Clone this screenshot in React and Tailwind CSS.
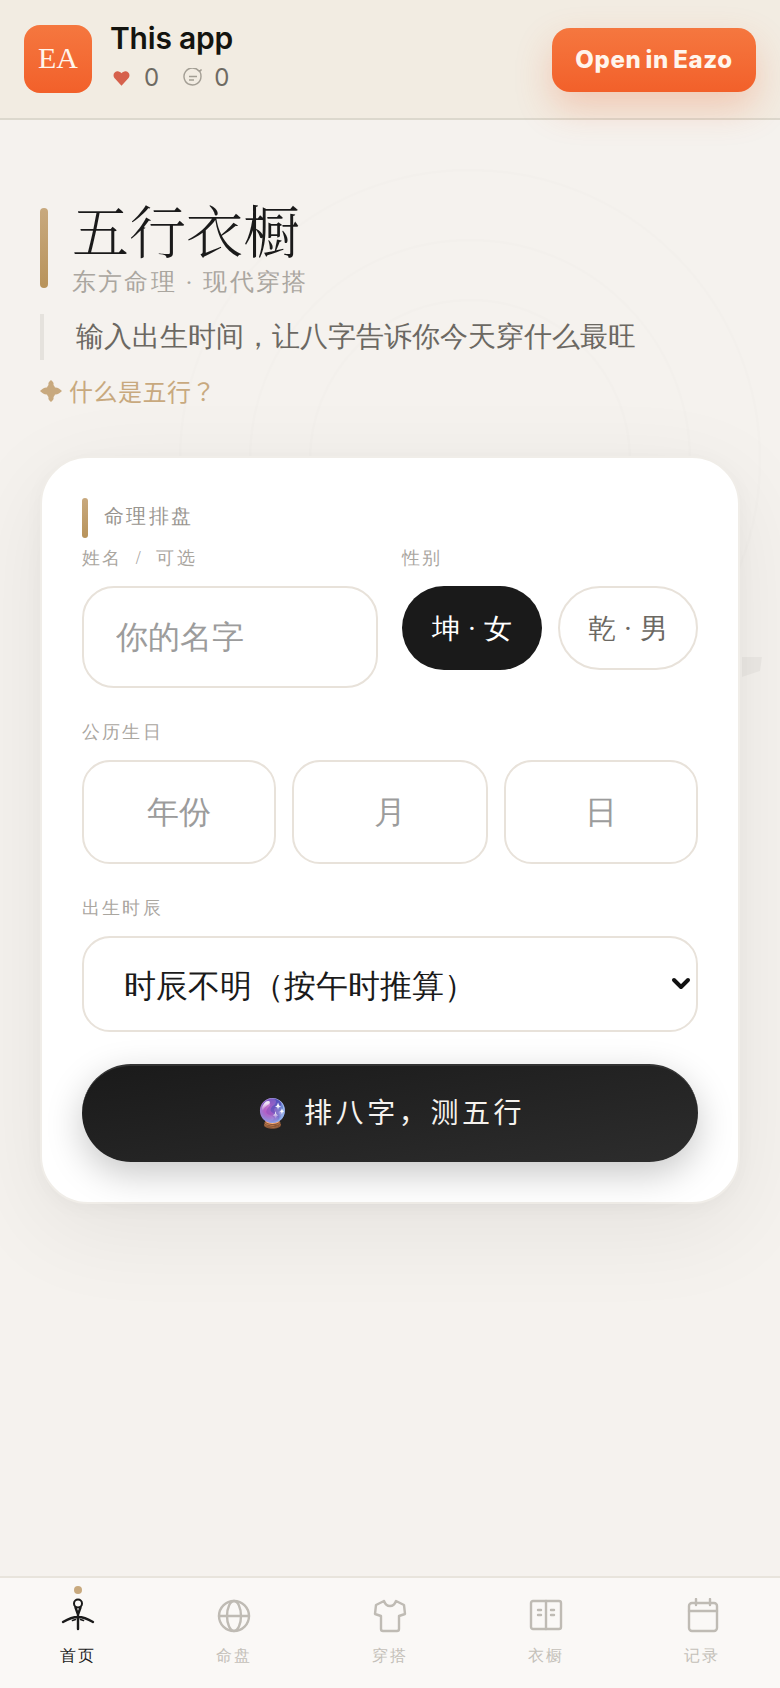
import React from "react";

function NavIcon({ children, active }) {
  return (
    <svg width="36" height="36" viewBox="0 0 36 36" fill="none" stroke={active ? "#1a1a1a" : "#bfbbb4"} strokeWidth="2.4" strokeLinecap="round" strokeLinejoin="round">
      {children}
    </svg>
  );
}

const tabs = [
  {
    label: "首页",
    active: true,
    icon: (
      <>
        <circle cx="18" cy="5.500" r="4" strokeWidth="2" />
        <path d="M18 17v14M3 24c5-3 10-5 15-5s10 2 15 5M15.500 9.500l2.500 7 2.500-7" />
        <path d="M12.500 22.500l3-1M23.500 22.500l-3-1" strokeWidth="1.600" />
      </>
    ),
  },
  {
    label: "命盘",
    icon: (
      <>
        <circle cx="18" cy="18" r="15" />
        <ellipse cx="18" cy="18" rx="7" ry="15" />
        <path d="M3 18h30" />
      </>
    ),
  },
  {
    label: "穿搭",
    icon: <path d="M12 3 4 7 3 16l6 2v13a2 2 0 0 0 2 2h14a2 2 0 0 0 2-2V18l6-2-1-9-8-4c-1 3-3 5-6 5s-5-2-6-5Z" />,
  },
  {
    label: "衣橱",
    icon: (
      <>
        <rect x="3" y="3" width="30" height="28" rx="2" />
        <path d="M18 3v28M10 12h3M10 17h3M23 12h3M23 17h3" />
      </>
    ),
  },
  {
    label: "记录",
    icon: (
      <>
        <rect x="5" y="5" width="28" height="28" rx="3" />
        <path d="M5 13h28M12 1v6M26 1v6" />
      </>
    ),
  },
];

export default function App() {
  return (
    <div className="relative flex h-[1688px] w-[780px] flex-col overflow-hidden bg-[#f5f2ee] font-['Liberation_Serif',serif]">
      {/* Header */}
      <header className="relative z-10 flex h-[120px] shrink-0 items-center justify-between border-b-2 border-[#dcd8cd] bg-[#f2ece2] px-6 font-['Inter','Noto_Sans_CJK_SC',sans-serif]">
        <div className="flex items-center gap-[18px]">
          <div className="flex size-[68px] items-center justify-center rounded-2xl bg-gradient-to-b from-[#f5773f] to-[#f2602a] pb-1 font-['Liberation_Serif',serif] text-[30px] text-[#fff5ec]">
            EA
          </div>
          <div className="-mt-2 flex flex-col">
            <div className="text-[30px] font-semibold leading-[38px] tracking-[-0.2px] text-[#14140f]">This app</div>
            <div className="mt-[7px] flex items-center text-[24px] leading-7 text-[#6e6a62]">
              <svg width="17" height="16" viewBox="0 0 20 18" className="ml-[3px]">
                <path d="M10 18 2.500 10C-1 6.500.8 1.500 4.800 1 7 .8 9 2 10 3.500 11 2 13 .8 15.200 1c4 .5 5.800 5.500 2.300 9Z" fill="#d6614c" />
              </svg>
              <span className="ml-[14px]">0</span>
              <svg width="20" height="20" viewBox="0 0 20 20" fill="none" stroke="#a39e94" strokeWidth="1.400" className="ml-6">
                <path d="M18.500 1.500l-2.300 1.700A8.500 8.500 0 1 0 18 8.500c0-2-.3-3.500-1.200-5Z" />
                <path d="M6 8.500h8M6 12h5" />
              </svg>
              <span className="ml-[11px]">0</span>
            </div>
          </div>
        </div>
        <div className="mt-[2px] flex h-16 w-[204px] items-center justify-center rounded-[18px] bg-gradient-to-b from-[#f5773f] to-[#f2602a] text-[24px] font-extrabold tracking-[0.6px] text-[#fff5ec] shadow-[0_16px_36px_rgba(240,96,42,0.25)] [word-spacing:-1.500px]">
          Open in Eazo
        </div>
      </header>

      {/* Hero */}
      <main className="relative flex flex-1 flex-col px-10">
        <svg className="absolute left-0 top-0" width="780" height="900" fill="none" stroke="#000" strokeOpacity="0.006" strokeWidth="3">
          <circle cx="470" cy="340" r="160" />
          <circle cx="470" cy="340" r="220" />
          <circle cx="470" cy="340" r="290" />
          <path d="M742 537h20l-2 14-18 6Z" fill="#000" fillOpacity="0.035" stroke="none" />
        </svg>
        <div className="relative mt-[76px] flex items-start gap-6">
          <div className="mt-[12px] h-20 w-2 rounded bg-gradient-to-b from-[#c8a97e] to-[#b8935a]" />
          <div className="flex flex-col">
            <h1 className="font-['Noto_Serif_CJK_SC','Noto_Sans_CJK_SC',serif] text-[57px] font-light leading-[64px] text-[#1a1a1a]">五行衣橱</h1>
            <p className="mt-[6px] text-[24px] leading-[32px] tracking-[2.2px] text-[#aaa69f]">东方命理 · 现代穿搭</p>
          </div>
        </div>

        <div className="relative mt-[16px] flex h-[46px] items-center border-l-4 border-[#e5e2dd] pl-8 font-[sans-serif] text-[28px] text-[#6b6862]">
          输入出生时间，让八字告诉你今天穿什么最旺
        </div>

        <div className="relative mt-[15px] flex items-center font-['Noto_Sans_CJK_TC',sans-serif] text-[24px] leading-8 tracking-[0.5px] text-[#c8a97e]">
          <span className="mr-[7px]">
            <svg width="22" height="22" viewBox="0 0 22 22" fill="#c8a97e" className="block">
              <path d="M11 0c2 1.500 3 3 2.500 5 .8 1 1.200 1.800 1.500 2.500 2-.5 5 1.500 7 3.500-2 2-5 4-7 3.500-.3.700-.7 1.500-1.500 2.500.5 2-.5 3.500-2.500 5-2-1.500-3-3-2.500-5-.8-1-1.200-1.800-1.500-2.500-2 .5-5-1.500-7-3.500 2-2 5-4 7-3.500.3-.7.7-1.500 1.500-2.500C8 3 9 1.500 11 0Z" />
            </svg>
          </span>
          什么是五行？
        </div>

        {/* Card */}
        <section className="relative mt-[49px] flex flex-col rounded-[48px] border-2 border-[#f0ede8] bg-white px-10 pb-10 pt-10 shadow-[0_24px_96px_rgba(0,0,0,0.07),0_4px_20px_rgba(0,0,0,0.03)]">
          <div className="flex h-10 items-center gap-[16px]">
            <div className="h-10 w-1.5 rounded bg-gradient-to-b from-[#c8a97e] to-[#b8935a]" />
            <span className="pb-1 text-[20px] tracking-[2.400px] text-[#999590]">命理排盘</span>
          </div>

          <div className="mt-2 flex gap-6">
            <div className="flex w-[296px] flex-col">
              <label className="text-[18px] leading-[24px] tracking-[2.2px] text-[#aaa69f]">姓名&nbsp;&nbsp;/&nbsp;&nbsp;可选</label>
              <input
                placeholder="你的名字"
                className="mt-4 h-[102px] w-full rounded-[32px] border-2 border-[#e8e2da] bg-white px-8 text-[32px] text-[#1a1a1a] outline-none placeholder:text-[#9c9c9c]"
              />
            </div>
            <div className="flex flex-1 flex-col">
              <label className="text-[18px] leading-[24px] tracking-[2.2px] text-[#aaa69f]">性别</label>
              <div className="mt-4 flex gap-4">
                <div className="flex h-[84px] w-[140px] items-center justify-center rounded-[42px] bg-[#1a1a1a] pt-[2px] text-[28px] text-white">坤 · 女</div>
                <div className="flex h-[84px] w-[140px] items-center justify-center rounded-[42px] border-2 border-[#e8e2da] bg-white pt-[2px] text-[28px] text-[#6b6862]">乾 · 男</div>
              </div>
            </div>
          </div>

          <label className="mt-8 text-[18px] leading-[24px] tracking-[2.2px] text-[#aaa69f]">公历生日</label>
          <div className="mt-[16px] flex gap-4">
            <input placeholder="年份" className="h-[104px] w-[194px] min-w-0 rounded-[28px] border-2 border-[#e8e2da] bg-white text-center text-[32px] text-[#1a1a1a] outline-none placeholder:text-[#9c9c9c]" />
            <input placeholder="月" className="h-[104px] w-[196px] min-w-0 rounded-[28px] border-2 border-[#e8e2da] bg-white text-center text-[32px] text-[#1a1a1a] outline-none placeholder:text-[#9c9c9c]" />
            <input placeholder="日" className="h-[104px] min-w-0 flex-1 rounded-[28px] border-2 border-[#e8e2da] bg-white text-center text-[32px] text-[#1a1a1a] outline-none placeholder:text-[#9c9c9c]" />
          </div>

          <label className="mt-8 text-[18px] leading-[24px] tracking-[2.2px] text-[#aaa69f]">出生时辰</label>
          <div className="relative mt-[16px]">
            <select className="h-24 w-full appearance-none rounded-[28px] border-2 border-[#e8e2da] bg-white px-10 pt-[3px] text-[32px] text-[#1a1a1a] outline-none">
              <option>时辰不明（按午时推算）</option>
            </select>
            <svg className="pointer-events-none absolute right-[6px] top-[37px]" width="22" height="22" viewBox="0 0 22 22" fill="none" stroke="#111" strokeWidth="4" strokeLinecap="round" strokeLinejoin="round">
              <path d="m4 7 7 7 7-7" />
            </svg>
          </div>

          <button className="mt-8 flex h-[98px] w-full items-center justify-center rounded-[49px] border-t-2 border-[#333] bg-gradient-to-br from-[#1a1a1a] to-[#2d2d2d] font-['Liberation_Serif','Noto_Sans_CJK_SC',sans-serif] text-[28px] tracking-[3.6px] text-[#f5f2ee] shadow-[0_12px_36px_rgba(0,0,0,0.22)]">
            🔮&nbsp;排八字，测五行
          </button>
        </section>
      </main>

      {/* Tab bar */}
      <nav className="relative flex h-[112px] shrink-0 border-t-2 border-[#e8e4dc] bg-[#faf8f6]">
        {tabs.map((t) => (
          <div key={t.label} className="relative flex flex-1 flex-col items-center pt-[20px]">
            {t.active && <div className="absolute top-2 size-2 rounded-full bg-[#c8a97e]" />}
            <NavIcon active={t.active}>{t.icon}</NavIcon>
            <span className={`mt-[10px] text-[16px] leading-6 tracking-[1.6px] ${t.active ? "text-[#1a1a1a]" : "text-[#c4c0b9]"}`}>{t.label}</span>
          </div>
        ))}
      </nav>
    </div>
  );
}
